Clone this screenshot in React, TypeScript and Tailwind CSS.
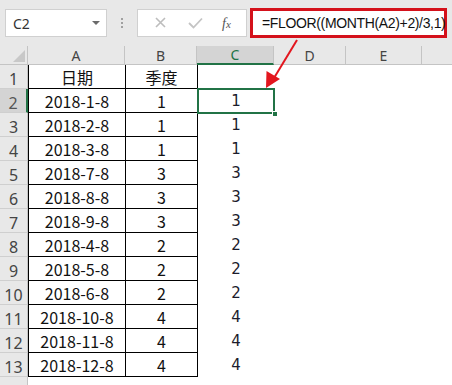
import React from "react";

const rows: [string, string, string][] = [
  ["日期", "季度", ""],
  ["2018-1-8", "1", "1"],
  ["2018-2-8", "1", "1"],
  ["2018-3-8", "1", "1"],
  ["2018-7-8", "3", "3"],
  ["2018-8-8", "3", "3"],
  ["2018-9-8", "3", "3"],
  ["2018-4-8", "2", "2"],
  ["2018-5-8", "2", "2"],
  ["2018-6-8", "2", "2"],
  ["2018-10-8", "4", "4"],
  ["2018-11-8", "4", "4"],
  ["2018-12-8", "4", "4"],
];

const cjk = "font-['Noto_Sans_CJK_SC','Noto_Sans',sans-serif]";

export default function App() {
  return (
    <div className="relative w-[452px] h-[385px] overflow-hidden bg-white select-none">
      {/* Toolbar: name box + formula bar */}
      <div className="flex items-center h-[46px] bg-[#e8e8e8] pl-[5px]">
        <div className="flex items-center w-[102px] h-[28px] bg-white border border-[#d0d0d0] pl-[7px] pr-[6px]">
          <span className="flex-1 text-[14px] text-[#333] font-['Noto_Sans',sans-serif]">C2</span>
          <span className="w-0 h-0 border-l-[4px] border-r-[4px] border-t-[4px] border-l-transparent border-r-transparent border-t-[#6b6b6b]" />
        </div>
        <div className="w-[30px] flex flex-col items-center gap-[2px]">
          <span className="w-[2px] h-[2px] bg-[#a0a0a0]" />
          <span className="w-[2px] h-[2px] bg-[#a0a0a0]" />
          <span className="w-[2px] h-[2px] bg-[#a0a0a0]" />
        </div>
        <div className="flex items-center w-[110px] h-[28px] bg-white border border-[#d0d0d0]">
          <svg width="36" height="28" viewBox="0 0 36 28" className="ml-[4px]">
            <path d="M14 9 L23 18 M23 9 L14 18" stroke="#bdbdbd" strokeWidth="1.6" fill="none" />
          </svg>
          <svg width="34" height="28" viewBox="0 0 34 28">
            <path d="M11 14 L15.5 18.5 L24 9.5" stroke="#c4c4c4" strokeWidth="1.8" fill="none" />
          </svg>
          <span className="ml-[10px] text-[14px] italic text-[#555] font-['Liberation_Serif',serif]">
            f<span className="text-[11px]">x</span>
          </span>
        </div>
        <div className="ml-[3px] flex items-center w-[197px] h-[30px] bg-white border-[3px] border-[#d4111b] pl-[9px]">
          <span className="text-[14px] tracking-[-0.35px] text-[#111] whitespace-nowrap font-['Liberation_Sans',Arial,sans-serif]">
            =FLOOR((MONTH(A2)+2)/3,1)
          </span>
        </div>
      </div>

      {/* Column header row */}
      <div className="flex h-[19px] bg-[#e8e8e8] border-b border-[#c4c4c4] text-[14px] text-[#444] font-['Noto_Sans',sans-serif] leading-none">
        <div className="relative w-[28px] border-r border-[#c4c4c4]">
          <svg width="12" height="12" className="absolute right-[2px] bottom-[2px]">
            <path d="M12 0 L12 12 L0 12 Z" fill="#c8c8c8" />
          </svg>
        </div>
        <div className="w-[97px] border-r border-[#c4c4c4] flex items-end justify-center pb-[1px]">A</div>
        <div className="w-[72px] border-r border-[#c4c4c4] flex items-end justify-center pb-[1px]">B</div>
        <div className="w-[77px] bg-[#d4d4d4] border-r border-[#c4c4c4] border-b-2 border-b-[#217346] -mb-px flex items-end justify-center pb-[1px] text-[#217346]">
          C
        </div>
        <div className="w-[72px] border-r border-[#c4c4c4] flex items-end justify-center pb-[1px]">D</div>
        <div className="w-[76px] border-r border-[#c4c4c4] flex items-end justify-center pb-[1px]">E</div>
        <div className="flex-1" />
      </div>

      {/* Data rows */}
      {rows.map((r, i) => {
        const sel = i === 1;
        return (
          <div key={i} className="flex h-[24px]">
            <div
              className={`w-[28px] flex items-end justify-center pb-[1px] border-b border-[#cfcfcf] text-[16px] leading-none font-['Noto_Sans',sans-serif] ${
                sel
                  ? "bg-[#d4d4d4] border-r-2 border-r-[#217346] text-[#555]"
                  : "bg-[#e8e8e8] border-r border-r-[#c4c4c4] text-[#444]"
              }`}
            >
              {i + 1}
            </div>
            <div className={`w-[98px] border-l border-r border-b border-black flex items-center justify-center text-[16px] text-[#111] ${cjk}`}>
              {r[0]}
            </div>
            <div className={`w-[72px] border-r border-b border-black flex items-center justify-center text-[16px] text-[#111] ${cjk}`}>
              {r[1]}
            </div>
            <div
              className={`relative w-[76px] flex items-center justify-center text-[15px] text-[#1c1c2c] font-['DejaVu_Sans',sans-serif] ${
                sel ? "outline-2 outline-[#217346] -outline-offset-1" : ""
              }`}
            >
              {r[2]}
              {sel && (
                <span className="absolute -right-[4px] -bottom-[4px] w-[6px] h-[6px] bg-[#217346] border border-white" />
              )}
            </div>
            <div className="flex-1" />
          </div>
        );
      })}

      {/* Row 14 stub */}
      <div className="flex h-[10px]">
        <div className="w-[28px] bg-[#e8e8e8] border-r border-[#c4c4c4]" />
      </div>

      {/* Red annotation arrow */}
      <svg className="absolute left-0 top-0 pointer-events-none" width="452" height="385">
        <line x1="297" y1="40" x2="274" y2="78" stroke="#e3161e" strokeWidth="2" />
        <path d="M266 88 L266.5 71 L280 79 Z" fill="#e3161e" />
      </svg>
    </div>
  );
}
